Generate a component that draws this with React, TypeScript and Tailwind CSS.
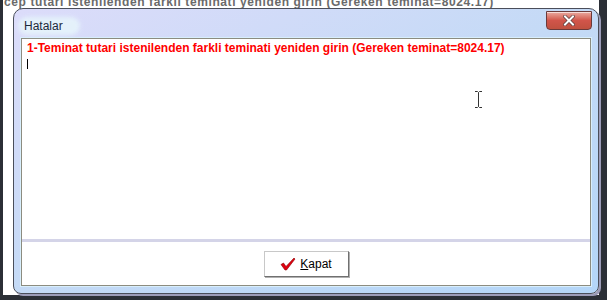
import React from "react";

const message =
  "1-Teminat tutari istenilenden farkli teminati yeniden girin (Gereken teminat=8024.17)";

function CloseButton() {
  return (
    <div className="absolute right-[6px] top-[2px] w-[46px] h-[19px] rounded-b-[4px] border border-[#6b3a3a] bg-gradient-to-b from-[#e9a9a0] via-[#d1554a] to-[#c0503f] flex items-center justify-center shadow-[inset_0_1px_0_rgba(255,255,255,0.6)]">
      <svg width="12" height="11" viewBox="0 0 12 11">
        <path d="M2 1.5 L10 9.5 M10 1.5 L2 9.5" stroke="#5a3a3a" strokeWidth="3.4" strokeLinecap="square" />
        <path d="M2 1.5 L10 9.5 M10 1.5 L2 9.5" stroke="#ffffff" strokeWidth="2" strokeLinecap="square" />
      </svg>
    </div>
  );
}

function Check() {
  return (
    <svg width="16" height="14" viewBox="0 0 16 14">
      <path d="M1 7.5 L3.5 6 L6 9.5 L14 1 L15 2 L6.5 13 L5 13 Z" fill="#e00010" stroke="#8a0000" strokeWidth="0.6" />
    </svg>
  );
}

function IBeam() {
  return (
    <svg width="9" height="17" viewBox="0 0 9 17" className="absolute left-[452px] top-[52px]">
      <path d="M1 0.5 H3.5 L4.5 1.5 L5.5 0.5 H8 M4.5 1.5 V15.5 M1 16.5 H3.5 L4.5 15.5 L5.5 16.5 H8" stroke="#333" strokeWidth="1" fill="none" />
    </svg>
  );
}

export default function App() {
  return (
    <div
      className="relative w-[607px] h-[300px] overflow-hidden bg-white"
      style={{ fontFamily: "'Liberation Sans', Arial, sans-serif" }}
    >
      {/* desktop behind */}
      <div className="absolute left-0 top-0 w-[3px] h-full bg-[#2b2f36]" />
      <div className="absolute right-0 top-0 w-[8px] h-full bg-[#2b2f36]" />
      <div className="absolute left-0 bottom-0 w-full h-[5px] bg-[#2b2f36]" />
      <div className="absolute left-[4px] top-[-5px] text-[12px] leading-[15px] font-bold text-[#6a6a6a] whitespace-nowrap tracking-[0.6px]">
        cep tutari istenilenden farkli teminati yeniden girin (Gereken teminat=8024.17)
      </div>

      {/* window */}
      <div className="absolute left-[13px] top-[8px] w-[586px] h-[286px] rounded-t-[10px] rounded-b-[8px] border border-[#4a4e5a] bg-gradient-to-br from-[#dcdcfa] via-[#c4daf6] to-[#b4d6f8] shadow-[2px_2px_0_#9c9cb8] flex flex-col">
        {/* title bar */}
        <div className="relative h-[29px] shrink-0">
          <div className="absolute left-[4px] top-[8px] w-[62px] h-[18px] rounded-full bg-[#e6f4fb] opacity-90 blur-[2px]" />
          <span className="absolute left-[10px] top-[8px] text-[12px] text-[#1c2a3a]">Hatalar</span>
          <CloseButton />
        </div>

        {/* client */}
        <div className="mx-[7px] mb-[7px] flex-1 flex flex-col bg-white border border-[#8c8c80] shadow-[0_0_0_1px_#d8eefc]">
          <div className="relative h-[203px] border-b-[3px] border-[#d4d4e8] pl-[5px] pt-[2px]">
            <div className="text-[12px] font-bold text-[#ff0000] leading-[15px] whitespace-nowrap tracking-[0px]">
              {message}
            </div>
            <div className="mt-[3px] w-[1px] h-[10px] bg-black" />
            <IBeam />
          </div>
          <div className="flex-1 flex items-center justify-center">
            <button className="w-[85px] h-[26px] flex items-center justify-center gap-[4px] bg-white border border-[#c8c8c8] border-r-[#707070] border-b-[#707070] shadow-[1px_1px_0_#b0b0b0] text-[12px] text-black">
              <Check />
              <span>
                <span className="underline">K</span>apat
              </span>
            </button>
          </div>
        </div>
      </div>
    </div>
  );
}
